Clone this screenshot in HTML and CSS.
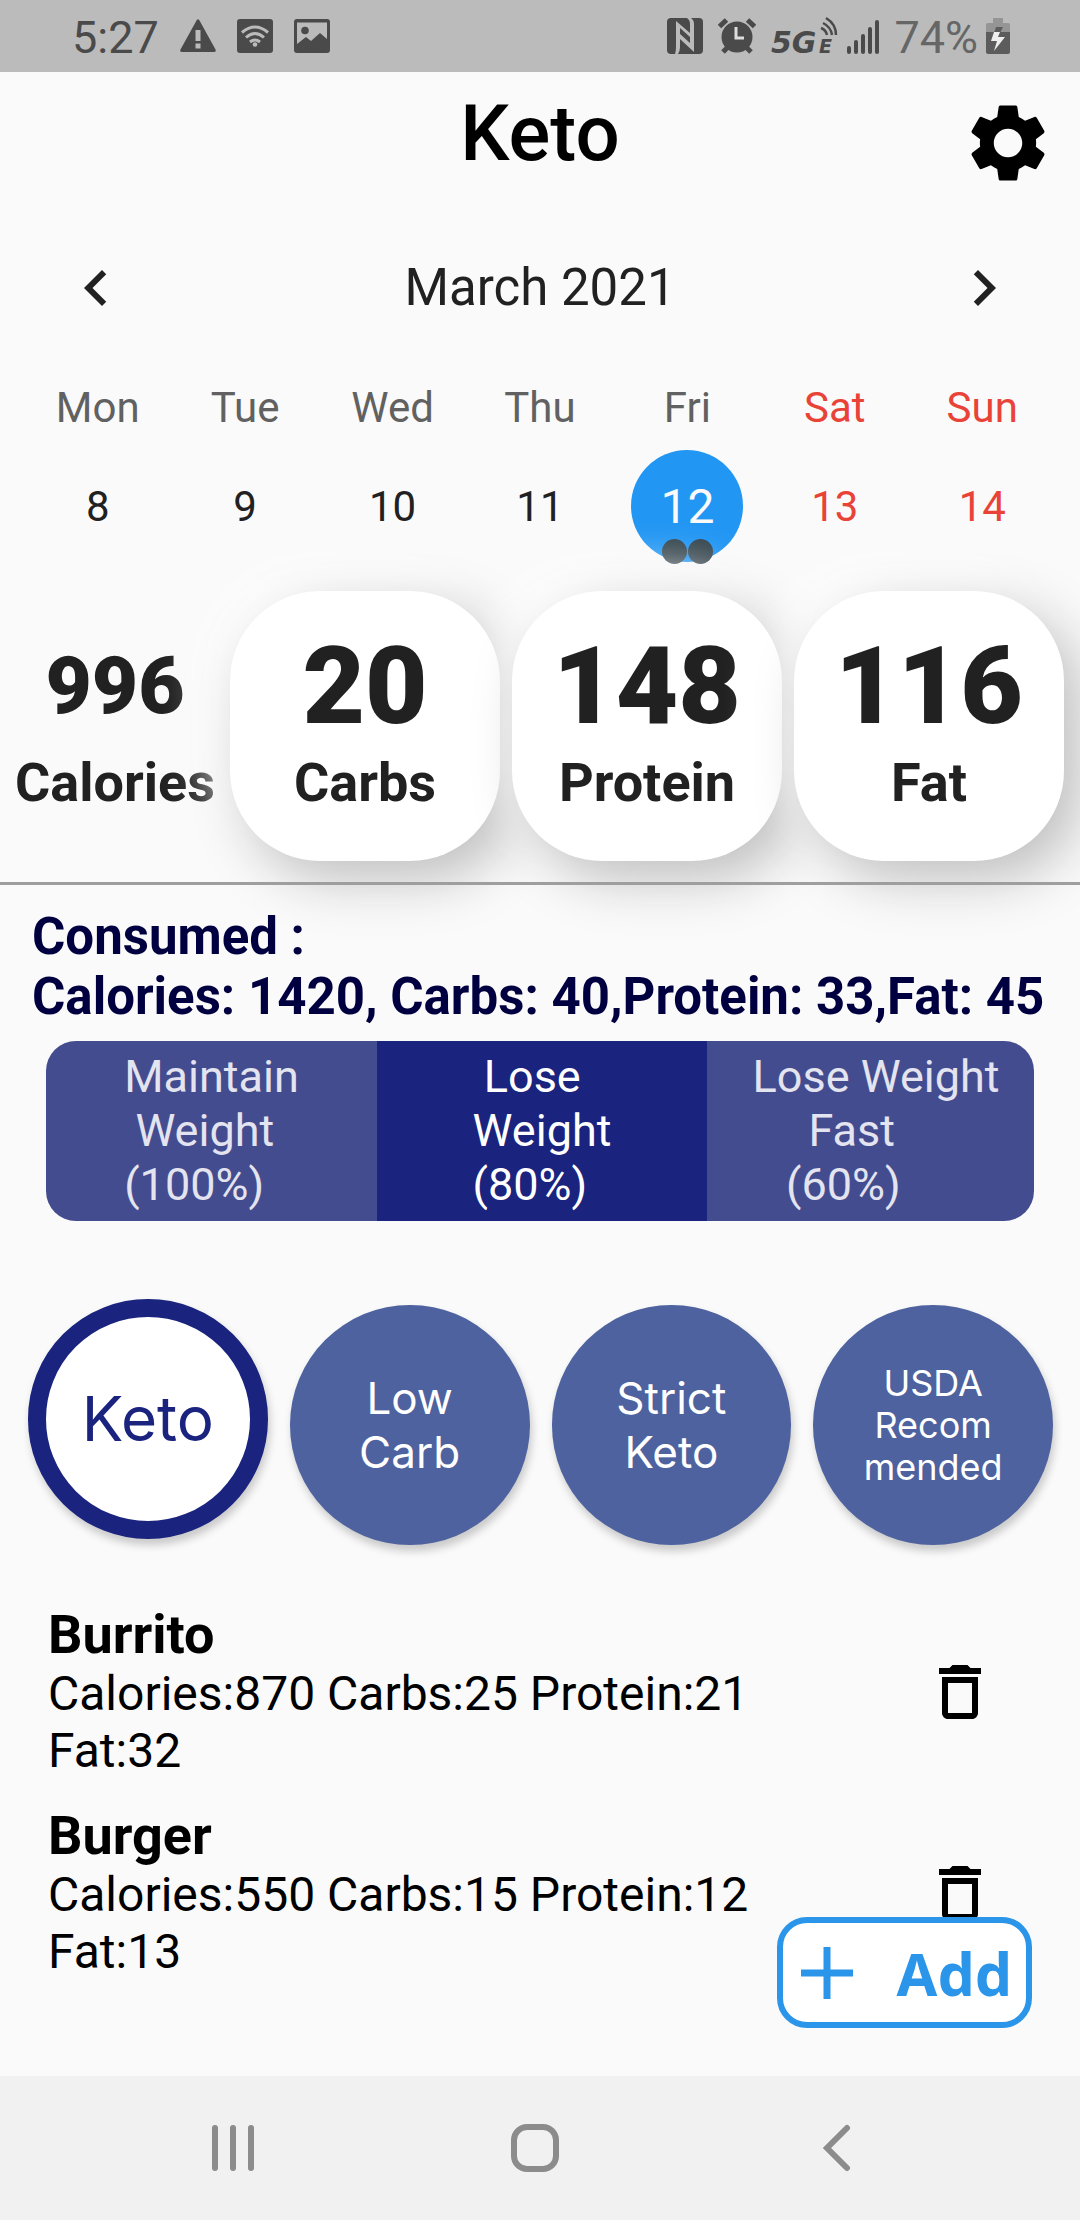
FILE: index.html
```
<!DOCTYPE html>
<html lang="en">
<head>
  <meta charset="UTF-8">
  <meta name="viewport" content="width=device-width, initial-scale=1">
  <title>Keto</title>
  <link rel="stylesheet" href="styles.css">
</head>
<body>
  <div class="status-bar">
    <div class="status-group status-left">
      <span class="clock">5:27</span>
      <svg width="36" height="36" viewBox="0 0 36 36"><path fill="#4a4a4a" fill-rule="evenodd" d="M16.500 2.500Q18 0 19.500 2.500L35.500 31.500Q36.500 34 34 34H2Q-.5 34 .5 31.500zM15.500 12h5v11h-5zM15.500 25.500h5v5h-5z"/></svg>
      <svg width="36" height="36" viewBox="0 0 36 36"><rect y="1" width="36" height="34" rx="3" fill="#4a4a4a"/><g fill="none" stroke="#bbb" stroke-width="3"><path d="M5 14.500Q18 3.500 31 14.500M9 19.500Q18 11.500 27 19.500M13 24Q18 20 23 24"/></g><circle cx="18" cy="26.500" r="2.300" fill="#bbb"/></svg>
      <svg width="36" height="36" viewBox="0 0 36 36"><path fill="#4a4a4a" fill-rule="evenodd" d="M3 1h30q3 0 3 3v28q0 3-3 3H3q-3 0-3-3V4q0-3 3-3zM3 4.500V26l9-7 5 4 9-8 7 6V4.500z"/><circle cx="11" cy="12.500" r="3.800" fill="#4a4a4a"/></svg>
    </div>
    <div class="status-group status-right">
      <svg class="spaced" width="36" height="36" viewBox="0 0 36 36"><rect width="36" height="36" rx="4" fill="#4a4a4a"/><path fill="#bbb" d="M9 3l14 12V6q0-4-3-6h4q3 2 3 6v28L13 21v8q0 4-2 7H8q1-3 1-7z"/><path fill="#4a4a4a" d="M13 10v6l10 9v-6z"/></svg>
      <svg class="spaced" width="38" height="36" viewBox="0 0 38 36"><g stroke="#4a4a4a" stroke-width="5"><path d="M1.500 8.500L8.500 2M36.500 8.500L29.500 2"/><path d="M9 30l-4 4M29 30l4 4"/></g><circle cx="19" cy="19" r="15.500" fill="#4a4a4a"/><path fill="none" stroke="#ddd" stroke-width="3" d="M18 9v11h8"/></svg>
      <svg width="68" height="54" viewBox="0 -8 68 54"><g class="net"><text x="0" y="36" font-size="30">5G</text><text x="48" y="36" font-size="19">E</text></g><g fill="none" stroke="#4a4a4a" stroke-width="2.500"><path d="M50 11q5 2 6 7M52 6q8 4 9 12M55 1q10 6 10 17"/></g></svg>
      <svg class="spaced" width="32" height="36" viewBox="0 0 32 36"><g stroke="#4a4a4a" stroke-width="4" stroke-linecap="round"><path d="M2 30v4M9 24v10M16 18v16M23 11v23M30 4v30"/></g></svg>
      <span class="battery-level">74%</span>
      <svg width="24" height="36" viewBox="0 0 24 36"><path fill="#959595" d="M7 0h10v5h5q2 0 2 2v8H0V7q0-2 2-2h5z"/><path fill="#5c5c5c" d="M0 14h24v20q0 2-2 2H2q-2 0-2-2z"/><path fill="#5c5c5c" d="M10 9h7l-3 6H8z"/><path fill="#eee" d="M8 14h6l-2 5h7L8 33l3-10H5z"/></svg>
    </div>
  </div>

  <main class="app">
    <header class="header">
      <h1>Keto</h1>
      <button class="icon-btn settings" aria-label="Settings">
        <svg width="90" height="90" viewBox="0 0 24 24"><path d="M19.430 12.980c.04-.32.07-.64.07-.98s-.03-.66-.07-.98l2.110-1.650c.19-.15.24-.42.12-.64l-2-3.460c-.12-.22-.39-.3-.61-.22l-2.490 1c-.52-.4-1.080-.73-1.690-.98l-.38-2.650C14.460 2.180 14.250 2 14 2h-4c-.25 0-.46.18-.49.42l-.38 2.650c-.61.25-1.170.59-1.690.98l-2.490-1c-.23-.09-.49 0-.61.22l-2 3.460c-.13.22-.07.49.12.64l2.110 1.650c-.04.32-.07.65-.07.98s.03.66.07.98l-2.110 1.650c-.19.15-.24.42-.12.64l2 3.460c.12.22.39.3.61.22l2.490-1c.52.4 1.080.73 1.690.98l.38 2.650c.03.24.24.42.49.42h4c.25 0 .46-.18.49-.42l.38-2.650c.61-.25 1.170-.59 1.690-.98l2.490 1c.23.09.49 0 .61-.22l2-3.460c.12-.22.07-.49-.12-.64l-2.110-1.650zM12 15.800c-2.100 0-3.800-1.700-3.800-3.800s1.700-3.800 3.800-3.800 3.800 1.700 3.800 3.800-1.700 3.800-3.800 3.800z"/></svg>
      </button>
    </header>

    <section class="calendar">
      <div class="calendar-head">
        <button class="icon-btn" aria-label="Previous week">
          <svg width="72" height="72" viewBox="0 0 24 24"><path fill="#212121" d="M15.410 7.410L14 6l-6 6 6 6 1.410-1.410L10.830 12z"/></svg>
        </button>
        <h2>March 2021</h2>
        <button class="icon-btn" aria-label="Next week">
          <svg width="72" height="72" viewBox="0 0 24 24"><path fill="#212121" d="M8.590 16.590L10 18l6-6-6-6-1.410 1.410L13.170 12z"/></svg>
        </button>
      </div>
      <table class="week">
        <thead>
          <tr>
            <th>Mon</th><th>Tue</th><th>Wed</th><th>Thu</th><th>Fri</th>
            <th class="weekend">Sat</th><th class="weekend">Sun</th>
          </tr>
        </thead>
        <tbody>
          <tr>
            <td><button class="day">8</button></td>
            <td><button class="day">9</button></td>
            <td><button class="day">10</button></td>
            <td><button class="day">11</button></td>
            <td><button class="day selected">12<span class="markers"><i></i><i></i></span></button></td>
            <td><button class="day weekend">13</button></td>
            <td><button class="day weekend">14</button></td>
          </tr>
        </tbody>
      </table>
    </section>

    <section class="targets">
      <div class="target plain"><strong>996</strong><span>Calories</span></div>
      <div class="target card"><strong>20</strong><span>Carbs</span></div>
      <div class="target card"><strong>148</strong><span>Protein</span></div>
      <div class="target card"><strong>116</strong><span>Fat</span></div>
    </section>

    <hr>

    <p class="consumed">Consumed :<br>Calories: 1420, Carbs: 40,Protein: 33,Fat: 45</p>

    <div class="goals">
      <button class="goal"><span>Maintain
 Weight
(100%)</span></button>
      <button class="goal active"><span> Lose
Weight
(80%)</span></button>
      <button class="goal"><span> Lose Weight
      Fast
    (60%)</span></button>
    </div>

    <div class="diets">
      <button class="diet active">Keto</button>
      <button class="diet">Low<br>Carb</button>
      <button class="diet">Strict<br>Keto</button>
      <button class="diet small">USDA<br>Recom<br>mended</button>
    </div>

    <ul class="foods">
      <li>
        <div class="food">
          <h3>Burrito</h3>
          <p>Calories:870 Carbs:25 Protein:21 Fat:32</p>
        </div>
        <button class="icon-btn" aria-label="Delete Burrito">
          <svg width="72" height="72" viewBox="0 0 24 24"><path d="M6 19c0 1.100.9 2 2 2h8c1.100 0 2-.9 2-2V7H6v12zM8 9h8v10H8V9zm7.500-5l-1-1h-5l-1 1H5v2h14V4z"/></svg>
        </button>
      </li>
      <li>
        <div class="food">
          <h3>Burger</h3>
          <p>Calories:550 Carbs:15 Protein:12 Fat:13</p>
        </div>
        <button class="icon-btn" aria-label="Delete Burger">
          <svg width="72" height="72" viewBox="0 0 24 24"><path d="M6 19c0 1.100.9 2 2 2h8c1.100 0 2-.9 2-2V7H6v12zM8 9h8v10H8V9zm7.500-5l-1-1h-5l-1 1H5v2h14V4z"/></svg>
        </button>
      </li>
    </ul>

    <button class="add">
      <svg width="54" height="54" viewBox="0 0 54 54"><path stroke="#2b95ea" stroke-width="7" d="M27 1v52M1 27h52"/></svg>
      <span>Add</span>
    </button>
  </main>

  <nav class="nav-bar">
    <button class="icon-btn" aria-label="Recent apps">
      <svg width="48" height="48" viewBox="0 0 48 48"><path d="M6 4v40M24 4v40M42 4v40"/></svg>
    </button>
    <button class="icon-btn" aria-label="Home">
      <svg width="48" height="48" viewBox="0 0 48 48"><rect x="3" y="3" width="42" height="42" rx="13"/></svg>
    </button>
    <button class="icon-btn" aria-label="Back">
      <svg width="48" height="48" viewBox="0 0 48 48"><path d="M34 4L14 24l20 20"/></svg>
    </button>
  </nav>
</body>
</html>
```
FILE: styles.css
```
* {
  box-sizing: border-box;
}
body {
  margin: 0;
  min-height: 100vh;
  display: flex;
  flex-direction: column;
  background: #fafafa;
  color: #000;
  font-family: Roboto, "Liberation Sans", sans-serif;
}
h1, h2, h3, p, ul {
  margin: 0;
  padding: 0;
}
button {
  border: 0;
  padding: 0;
  background: none;
  color: inherit;
  font: inherit;
  cursor: pointer;
}
svg {
  display: block;
  flex: none;
}

/* status bar */
.status-bar {
  height: 72px;
  padding: 0 70px 0 72px;
  display: flex;
  justify-content: space-between;
  align-items: center;
  background: #bbb;
  color: #4a4a4a;
  font-size: 45px;
  line-height: 48px;
}
.status-group {
  display: flex;
  align-items: center;
}
.status-left {
  gap: 21px;
}
.status-right {
  gap: 8px;
}
.spaced {
  margin-right: 7px;
}
.clock,
.battery-level {
  padding-top: 3px;
}
.battery-level {
  color: #666;
}
.net {
  fill: #4a4a4a;
  font-family: "DejaVu Sans", sans-serif;
  font-weight: bold;
  font-style: italic;
}

/* app */
.app {
  flex: 1;
  position: relative;
}
.header {
  display: grid;
  grid-template-columns: 1fr auto 1fr;
  align-items: start;
  padding: 16px 27px 0;
}
.header h1 {
  grid-column: 2;
  font-size: 78px;
  line-height: 92px;
  font-weight: 500;
}
.settings {
  justify-self: end;
  margin-top: 10px;
}

.calendar {
  padding: 64px 24px 0;
}
.calendar-head {
  display: flex;
  justify-content: space-between;
  align-items: center;
  padding: 0 36px;
}
.calendar-head h2 {
  color: #212121;
  font-size: 51px;
  line-height: 72px;
  font-weight: 400;
}
.week {
  width: 100%;
  margin-top: 60px;
  table-layout: fixed;
  border-collapse: collapse;
  font-size: 42px;
  text-align: center;
}
.week th {
  padding: 0 0 18px;
  color: #616161;
  line-height: 48px;
  font-weight: 400;
}
.week td {
  padding: 0;
}
.day {
  position: relative;
  display: block;
  width: 112px;
  height: 112px;
  margin: 0 auto;
  border-radius: 50%;
  color: #212121;
}
.week .weekend {
  color: #e94338;
}
.day.selected {
  background: #2196f3;
  color: #fafafa;
  font-size: 48px;
}
.markers {
  position: absolute;
  left: 0;
  right: 0;
  bottom: -2px;
  display: flex;
  justify-content: center;
  gap: 1px;
}
.markers i {
  width: 25px;
  height: 25px;
  border-radius: 50%;
  background: #37474f;
}

.targets {
  display: grid;
  grid-template-columns: 206fr 270fr 270fr 270fr;
  gap: 12px;
  margin-top: 29px;
  padding: 0 16px 0 12px;
}
.target {
  min-width: 0;
  height: 270px;
  padding-top: 32px;
  display: flex;
  flex-direction: column;
  align-items: center;
  gap: 4px;
  color: #212121;
  font-weight: 700;
}
.target strong {
  font-size: 108px;
  line-height: 126px;
}
.target span {
  font-size: 54px;
  line-height: 60px;
}
.target.plain strong {
  font-size: 80px;
}
.card {
  position: relative;
  border-radius: 90px;
  background: #fff;
  box-shadow: 16px 18px 54px #bebebe, -16px -16px 50px #fff;
}
hr {
  position: relative;
  height: 3px;
  margin: 21px 0 0;
  border: 0;
  background: #9e9e9e;
}

.consumed {
  padding: 22px 32px 0;
  color: #000040;
  font-size: 51px;
  line-height: 60px;
  font-weight: 700;
}

.goals {
  display: grid;
  grid-template-columns: 331fr 330fr 327fr;
  margin: 14px 46px 0;
  border-radius: 30px;
  overflow: hidden;
  font-size: 45px;
  line-height: 54px;
}
.goal {
  display: flex;
  justify-content: center;
  padding: 9px 0;
  background: #444c90;
  color: #e3e4ef;
}
.goal span {
  white-space: pre;
  text-align: left;
}
.goal.active {
  background: #1a237e;
  color: #fff;
}

.diets {
  display: grid;
  grid-template-columns: repeat(4, 1fr);
  align-items: start;
  gap: 22px;
  margin: 78px 27px 0 28px;
  font-family: Inter, "Open Sans", sans-serif;
  font-size: 44px;
  line-height: 54px;
}
.diet {
  aspect-ratio: 1;
  margin-top: 6px;
  border-radius: 50%;
  background: #4d629e;
  color: #fff;
  box-shadow: 2px 6px 8px rgba(0, 0, 0, 0.2);
}
.diet.active {
  margin-top: 0;
  border: 18px solid #1a237e;
  background: #fff;
  color: #1a237e;
  font-size: 62px;
}
.diet.small {
  font-size: 36px;
  line-height: 42px;
}

.foods {
  display: flex;
  flex-direction: column;
  gap: 27px;
  margin-top: 60px;
  padding: 0 84px 0 48px;
  list-style: none;
}
.foods li {
  display: flex;
  justify-content: space-between;
  align-items: center;
  gap: 72px;
}
.food h3 {
  font-size: 54px;
  line-height: 60px;
  font-weight: 700;
}
.food p {
  font-size: 48px;
  line-height: 57px;
}

.add {
  position: absolute;
  right: 48px;
  bottom: 48px;
  display: flex;
  align-items: center;
  gap: 43px;
  padding: 0 14px 0 17px;
  height: 111px;
  border: 6px solid #2b95ea;
  border-radius: 30px;
  background: #fff;
  color: #2b95ea;
  font-family: "Noto Sans", "Open Sans", sans-serif;
  font-size: 59px;
  font-weight: 700;
}

/* system navigation */
.nav-bar {
  height: 144px;
  padding: 0 92px 0 82px;
  display: grid;
  grid-template-columns: repeat(3, 1fr);
  justify-items: center;
  align-items: center;
  background: #f1f1f1;
}
.nav-bar svg {
  fill: none;
  stroke: #8c8c8c;
  stroke-width: 6;
  stroke-linecap: round;
}
```
